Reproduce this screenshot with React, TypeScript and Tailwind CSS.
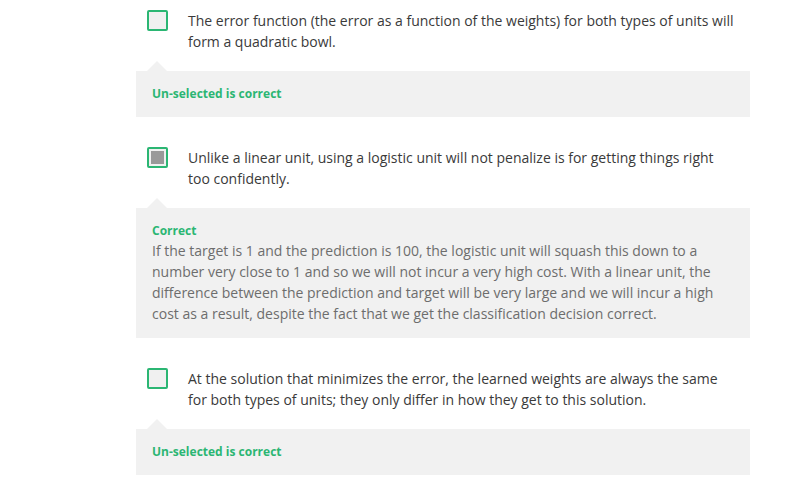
import React from 'react'

type Option = {
  text: string
  checked: boolean
  title: string
  explanation?: string
}

const options: Option[] = [
  {
    text: 'The error function (the error as a function of the weights) for both types of units will form a quadratic bowl.',
    checked: false,
    title: 'Un-selected is correct',
  },
  {
    text: 'Unlike a linear unit, using a logistic unit will not penalize is for getting things right too confidently.',
    checked: true,
    title: 'Correct',
    explanation:
      'If the target is 1 and the prediction is 100, the logistic unit will squash this down to a number very close to 1 and so we will not incur a very high cost. With a linear unit, the difference between the prediction and target will be very large and we will incur a high cost as a result, despite the fact that we get the classification decision correct.',
  },
  {
    text: 'At the solution that minimizes the error, the learned weights are always the same for both types of units; they only differ in how they get to this solution.',
    checked: false,
    title: 'Un-selected is correct',
  },
]

function Checkbox({ checked }: { checked: boolean }) {
  return (
    <div className="w-[21px] h-[21px] shrink-0 rounded-[2px] border-2 border-[#2bb673] bg-[#f0f0f0] p-[2px]">
      {checked && <div className="w-full h-full bg-[#999999]" />}
    </div>
  )
}

export default function App() {
  return (
    <div className="w-[787px] h-[494px] bg-white overflow-hidden" style={{ fontFamily: '"Open Sans", sans-serif' }}>
      <div className="ml-[136px] w-[614px] pt-[10px] flex flex-col gap-[30px]">
        {options.map((o, i) => (
          <div key={i}>
            <div className="flex items-start pl-[11px] gap-5">
              <Checkbox checked={o.checked} />
              <div className="text-[14px] leading-[21px] text-[#3a3a3a] pr-3">{o.text}</div>
            </div>
            <div className="mt-[9px] pl-[11px] h-[10px] flex">
              <div className="w-0 h-0 border-x-[10px] border-x-transparent border-b-[10px] border-b-[#f1f1f1]" />
            </div>
            <div className="bg-[#f1f1f1] px-4 py-[14px]">
              <div className="text-[12px] leading-[18px] font-bold text-[#2bb673]">{o.title}</div>
              {o.explanation && (
                <div className="text-[14px] leading-[21px] text-[#6d6d6d]">{o.explanation}</div>
              )}
            </div>
          </div>
        ))}
      </div>
    </div>
  )
}
